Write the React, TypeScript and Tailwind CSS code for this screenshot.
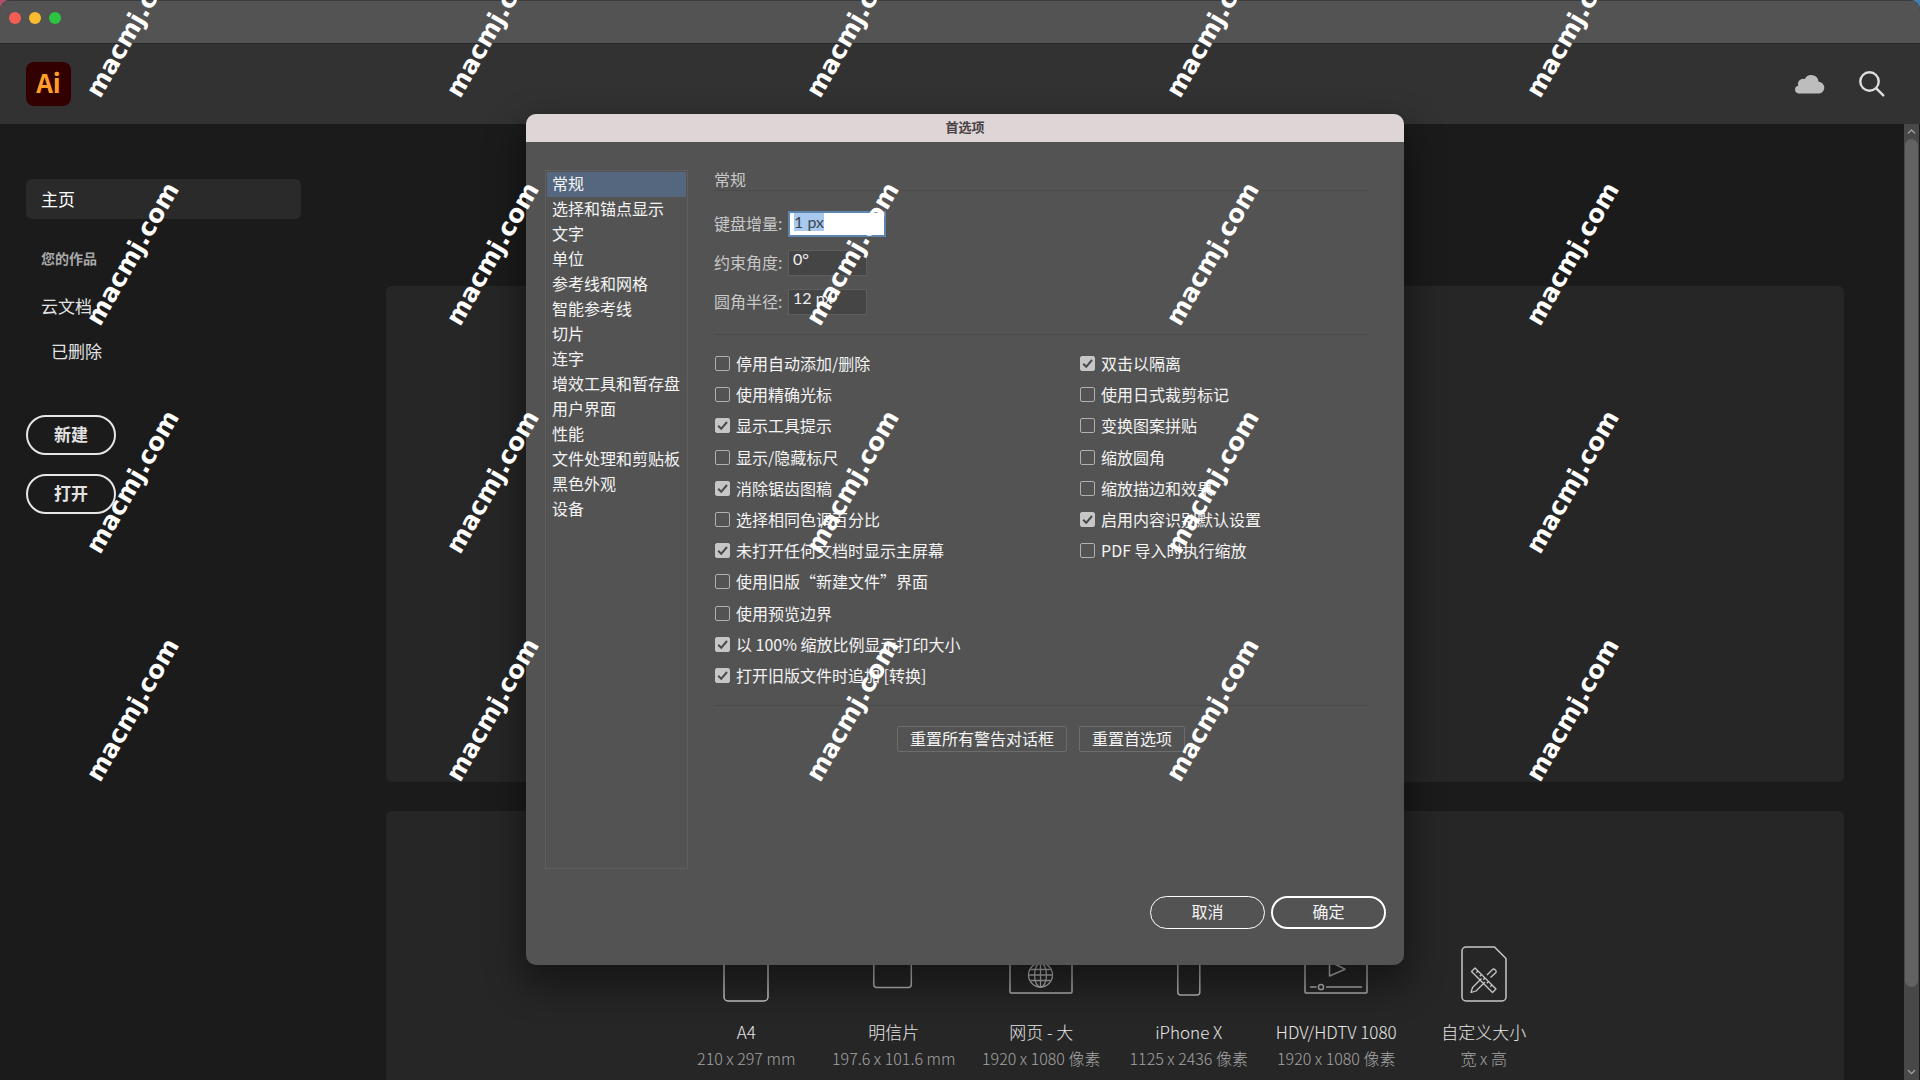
import { useEffect, useRef } from 'react';
import { ChevronDown, ChevronUp } from 'lucide-react';

const categories = [
  '常规',
  '选择和锚点显示',
  '文字',
  '单位',
  '参考线和网格',
  '智能参考线',
  '切片',
  '连字',
  '增效工具和暂存盘',
  '用户界面',
  '性能',
  '文件处理和剪贴板',
  '黑色外观',
  '设备',
];

interface Option {
  label: string;
  checked?: boolean;
}

const leftOptions: Option[] = [
  { label: '停用自动添加/删除' },
  { label: '使用精确光标' },
  { label: '显示工具提示', checked: true },
  { label: '显示/隐藏标尺' },
  { label: '消除锯齿图稿', checked: true },
  { label: '选择相同色调百分比' },
  { label: '未打开任何文档时显示主屏幕', checked: true },
  { label: '使用旧版“新建文件”界面' },
  { label: '使用预览边界' },
  { label: '以 100% 缩放比例显示打印大小', checked: true },
  { label: '打开旧版文件时追加 [转换]', checked: true },
];

const rightOptions: Option[] = [
  { label: '双击以隔离', checked: true },
  { label: '使用日式裁剪标记' },
  { label: '变换图案拼贴' },
  { label: '缩放圆角' },
  { label: '缩放描边和效果' },
  { label: '启用内容识别默认设置', checked: true },
  { label: 'PDF 导入时执行缩放' },
];

function CloudIcon() {
  return (
    <svg width="32" height="22" viewBox="0 0 32 22" fill="#bdbdbd" aria-hidden="true">
      <path d="M4.500 20.500a3.900 3.900 0 0 1-.3-7.700A5.300 5.300 0 0 1 10.800 6 7.300 7.300 0 0 1 24.600 8.800 5.900 5.900 0 0 1 25.500 20.500Z" />
    </svg>
  );
}

function SearchIcon() {
  return (
    <svg width="26" height="26" viewBox="0 0 26 26" fill="none" stroke="#dedede" strokeWidth="2.400" strokeLinecap="round" aria-hidden="true">
      <circle cx="10.500" cy="10.500" r="9.200" />
      <path d="M17.300 17.300L24.300 24.300" />
    </svg>
  );
}

function A4Icon() {
  return (
    <svg width="46" height="56" viewBox="0 0 46 56" fill="none" stroke="#c8c8c8" strokeWidth="1.500">
      <rect x="1" y="1" width="44" height="54" rx="4" />
    </svg>
  );
}

function PostcardIcon() {
  return (
    <svg width="42" height="56" viewBox="0 0 42 56" fill="none" stroke="#b4b4b4" strokeWidth="1.500">
      <rect x="0.800" y="14" width="37.500" height="27.500" rx="3" />
    </svg>
  );
}

function WebIcon() {
  return (
    <svg width="64" height="56" viewBox="0 0 64 56" fill="none" stroke="#b4b4b4" strokeWidth="1.500">
      <rect x="1" y="8" width="62" height="39" rx="1" />
      <g strokeWidth="1.300">
        <circle cx="31.500" cy="29" r="12" />
        <ellipse cx="31.500" cy="29" rx="6" ry="12" />
        <path d="M31.500 17v24M19.500 29h24M21.500 23.500h20M21.500 34.500h20" />
      </g>
    </svg>
  );
}

function PhoneIcon() {
  return (
    <svg width="24" height="56" viewBox="0 0 24 56" fill="none" stroke="#b4b4b4" strokeWidth="1.500">
      <rect x="0.800" y="6" width="22" height="43" rx="3" />
    </svg>
  );
}

function VideoIcon() {
  return (
    <svg width="64" height="56" viewBox="0 0 64 56" fill="none" stroke="#b4b4b4" strokeWidth="1.500">
      <rect x="1" y="8" width="62" height="39" rx="1" />
      <path d="M25.500 15.500L41 23.200L25.500 30Z" strokeLinejoin="round" />
      <path d="M6 41h6.500M22 41h36" />
      <circle cx="17" cy="41" r="2.600" />
    </svg>
  );
}

function CustomIcon() {
  return (
    <svg width="46" height="56" viewBox="0 0 46 56" fill="none" stroke="#c8c8c8" strokeWidth="1.500" strokeLinejoin="round">
      <path d="M5 1h28.500L45 12.500V51a4 4 0 0 1-4 4H5a4 4 0 0 1-4-4V5a4 4 0 0 1 4-4Z" />
      <g strokeWidth="1.300">
        <path d="M20.500 32.500L11.500 41.500L10 46.500L15 45L24 36M26 29L31.500 23.500a1.600 1.600 0 0 1 2.300 0l.9.900a1.600 1.600 0 0 1 0 2.300L29.500 31.500" />
        <path d="M14 22L35 43L31.500 46.500L10.500 25.500Z" />
        <path d="M17 25l-1.700 1.700M20.500 28.500l-1.700 1.700M24 32l-1.700 1.700M27.500 35.500l-1.700 1.700M31 39l-1.700 1.700" />
      </g>
    </svg>
  );
}

const templates = [
  { name: 'A4', size: '210 x 297 mm', Icon: A4Icon },
  { name: '明信片', size: '197.6 x 101.6 mm', Icon: PostcardIcon },
  { name: '网页 - 大', size: '1920 x 1080 像素', Icon: WebIcon },
  { name: 'iPhone X', size: '1125 x 2436 像素', Icon: PhoneIcon },
  { name: 'HDV/HDTV 1080', size: '1920 x 1080 像素', Icon: VideoIcon },
  { name: '自定义大小', size: '宽 x 高', Icon: CustomIcon },
];

function OptionColumn({ options }: { options: Option[] }) {
  return (
    <div className="grid grid-rows-11 items-center">
      {options.map((option) => (
        <label key={option.label} className="flex items-center gap-[6px] whitespace-nowrap">
          <span className="grid place-items-center">
            <input
              type="checkbox"
              defaultChecked={option.checked}
              className="peer col-start-1 row-start-1 size-[15px] appearance-none rounded-[2px] border border-[#b0b0b0] checked:border-[#c6c6c6] checked:bg-[#c6c6c6]"
            />
            <svg viewBox="0 0 15 15" className="pointer-events-none col-start-1 row-start-1 hidden size-[15px] peer-checked:block" fill="none" stroke="#484848" strokeWidth="2">
              <path d="M3.200 7.800L6.200 10.800L12 4" />
            </svg>
          </span>
          <span className="pb-px">{option.label}</span>
        </label>
      ))}
    </div>
  );
}

function PreferencesDialog() {
  const incrementRef = useRef<HTMLInputElement>(null);

  useEffect(() => {
    incrementRef.current?.focus();
    incrementRef.current?.select();
  }, []);

  return (
    <div
      role="dialog"
      aria-labelledby="dialog-title"
      className="absolute left-[526px] top-[114px] flex h-[851px] w-[878px] flex-col overflow-hidden rounded-[10px] bg-[#535353] text-base text-[#f4f4f4] shadow-[0_16px_36px_4px_rgba(0,0,0,0.450)]"
    >
      <h1 id="dialog-title" className="h-7 bg-[#ded5d7] text-center text-[13px] leading-[26px] font-bold text-[#4a4244]">
        首选项
      </h1>

      <div className="flex flex-1 pt-7 pr-9 pl-[19px]">
        {/* Category list */}
        <ul className="h-[699px] w-[143px] border border-[#5f5f5f] p-px">
          {categories.map((category, index) => (
            <li key={category}>
              <button
                type="button"
                className={
                  index === 0
                    ? 'block h-[25px] w-full bg-[#54677f] pb-[3px] pl-[5px] text-left leading-[22px] whitespace-nowrap'
                    : 'block h-[25px] w-full pb-[3px] pl-[5px] text-left leading-[22px] whitespace-nowrap'
                }
              >
                {category}
              </button>
            </li>
          ))}
        </ul>

        {/* General settings */}
        <div className="ml-[26px] flex-1">
          <h2 className="h-[21px] border-b border-[#4a4a4a] leading-[18px] text-[#c8c8c8]">常规</h2>

          <div className="mt-5 flex flex-col gap-[13px] text-[#c8c8c8]">
            <div className="flex h-[26px] items-center">
              <label htmlFor="increment" className="w-[74px] pb-[2px]">键盘增量:</label>
              <input
                id="increment"
                ref={incrementRef}
                defaultValue="1 px"
                className="h-[26px] w-[98px] border-2 border-[#5c84ae] bg-white px-1 pb-[6px] font-['Lato','Noto_Sans_CJK_SC',sans-serif] leading-[17px] text-[#3c4650] outline-none selection:bg-[#a9c9ee] selection:text-[#3c4650]"
              />
            </div>
            <div className="flex h-[26px] items-center">
              <label htmlFor="angle" className="w-[74px] pb-[2px]">约束角度:</label>
              <input
                id="angle"
                defaultValue="0°"
                className="h-[26px] w-[79px] border border-[#5e5e5e] bg-[#454545] px-1 pb-[9px] font-['Lato','Noto_Sans_CJK_SC',sans-serif] text-[#f0f0f0]"
              />
            </div>
            <div className="flex h-[26px] items-center">
              <label htmlFor="radius" className="w-[74px] pb-[2px]">圆角半径:</label>
              <input
                id="radius"
                defaultValue="12 px"
                className="h-[26px] w-[79px] border border-[#5e5e5e] bg-[#454545] px-1 pb-[9px] font-['Lato','Noto_Sans_CJK_SC',sans-serif] text-[#f0f0f0]"
              />
            </div>
          </div>

          <hr className="mt-[19px] border-[#4a4a4a]" />

          <div className="mt-[13px] grid h-[343px] grid-cols-[365px_1fr] pl-px">
            <OptionColumn options={leftOptions} />
            <OptionColumn options={rightOptions} />
          </div>

          <hr className="mt-[14px] border-[#4a4a4a]" />

          <div className="mt-5 flex justify-center gap-3">
            <button type="button" className="h-[26px] rounded-[2px] border border-[#6c6c6c] px-3 pb-[2px] leading-[22px]">重置所有警告对话框</button>
            <button type="button" className="h-[26px] rounded-[2px] border border-[#6c6c6c] px-3 pb-[2px] leading-[22px]">重置首选项</button>
          </div>
        </div>
      </div>

      <div className="flex justify-end gap-[6px] pr-[18px] pb-9">
        <button type="button" className="h-[33px] w-[115px] rounded-full border border-white pb-[3px] leading-6">取消</button>
        <button type="button" className="h-[33px] w-[115px] rounded-full border-2 border-white pb-[3px] leading-6">确定</button>
      </div>
    </div>
  );
}

function Watermark() {
  return (
    <div aria-hidden="true" className="pointer-events-none absolute inset-0 overflow-hidden">
      <div className="-mt-[88px] -ml-[47px] grid auto-rows-[228px] grid-cols-[repeat(5,360px)] place-items-center">
        {Array.from({ length: 20 }, (_, i) => (
          <span key={i} className="-rotate-60 font-['DejaVu_Sans',sans-serif] text-[25px] leading-7 font-bold text-white">
            macmj.com
          </span>
        ))}
      </div>
    </div>
  );
}

export default function App() {
  return (
    <div lang="zh-CN" className="relative h-screen overflow-hidden bg-linear-to-r from-[#b0506a] to-[#3f7fae] font-['Noto_Sans_CJK_SC',sans-serif]">
      <div className="flex h-full flex-col overflow-hidden rounded-t-[10px] bg-[#1b1b1b]">
        {/* Title bar */}
        <div className="flex h-[43px] shrink-0 gap-2 border-t border-[#3c3c3c] bg-[#535353] pt-[11px] pl-[9px]">
          <button type="button" aria-label="关闭" className="size-3 rounded-full bg-[#f45d55]"></button>
          <button type="button" aria-label="最小化" className="size-3 rounded-full bg-[#f9bb2f]"></button>
          <button type="button" aria-label="缩放" className="size-3 rounded-full bg-[#2bc53f]"></button>
        </div>

        <header className="flex h-[81px] shrink-0 items-center gap-[33px] border-t border-[#2a2a2a] bg-[#323232] pr-[35px] pl-[26px]">
          <div className="mr-auto h-11 w-[45px] rounded-lg bg-[#330000] text-center text-[26px] leading-[39px] font-bold text-[#ff9f2a]">Ai</div>
          <button type="button" aria-label="云文档"><CloudIcon /></button>
          <button type="button" aria-label="搜索"><SearchIcon /></button>
        </header>

        <div className="flex min-h-0 flex-1">
          {/* Sidebar */}
          <aside className="w-[386px] shrink-0 pt-[55px] pl-[26px] text-[17px] text-[#e2e2e2]">
            <nav className="flex w-[275px] flex-col">
              <a href="#home" className="h-10 rounded-md bg-[#2a2a2a] pl-[15px] leading-10 text-white">主页</a>
              <h3 className="mt-[27px] pl-[15px] text-sm leading-6 font-bold text-[#a8a8a8]">您的作品</h3>
              <a href="#cloud" className="mt-6 pl-[15px] leading-6">云文档</a>
              <a href="#deleted" className="mt-[21px] pl-[25px] leading-6">已删除</a>
            </nav>
            <div className="mt-[52px] flex flex-col gap-[19px]">
              <button type="button" className="h-10 w-[90px] rounded-full border-2 border-[#e6e6e6] pb-[2px] leading-8 font-bold">新建</button>
              <button type="button" className="h-10 w-[90px] rounded-full border-2 border-[#e6e6e6] pb-[2px] leading-8 font-bold">打开</button>
            </div>
          </aside>

          <main className="flex flex-1 flex-col gap-[29px] pt-[162px] pr-[60px]">
            <section className="h-[496px] shrink-0 rounded-md bg-[#262626]"></section>
            <section className="flex-1 rounded-t-md bg-[#262626] pt-[135px]">
              <ul className="mx-auto grid w-[885px] grid-cols-6">
                {templates.map(({ name, size, Icon }) => (
                  <li key={name} className="flex flex-col items-center leading-[26px] font-light whitespace-nowrap">
                    <Icon />
                    <span className="mt-[17px] text-[17px] text-[#e6e6e6]">{name}</span>
                    <span className="text-base leading-[26px] text-[#a4a4a4]">{size}</span>
                  </li>
                ))}
              </ul>
            </section>
          </main>

          {/* Scrollbar */}
          <div className="mr-px flex w-[15px] flex-col items-center bg-[#484848] text-[#b0b0b0]">
            <ChevronUp className="h-[15px] w-[13px] shrink-0" />
            <div className="h-[848px] w-[13px] rounded-full bg-[#626262]"></div>
            <ChevronDown className="mt-auto h-4 w-[13px] shrink-0" />
          </div>
        </div>
      </div>

      <PreferencesDialog />
      <Watermark />
    </div>
  );
}
